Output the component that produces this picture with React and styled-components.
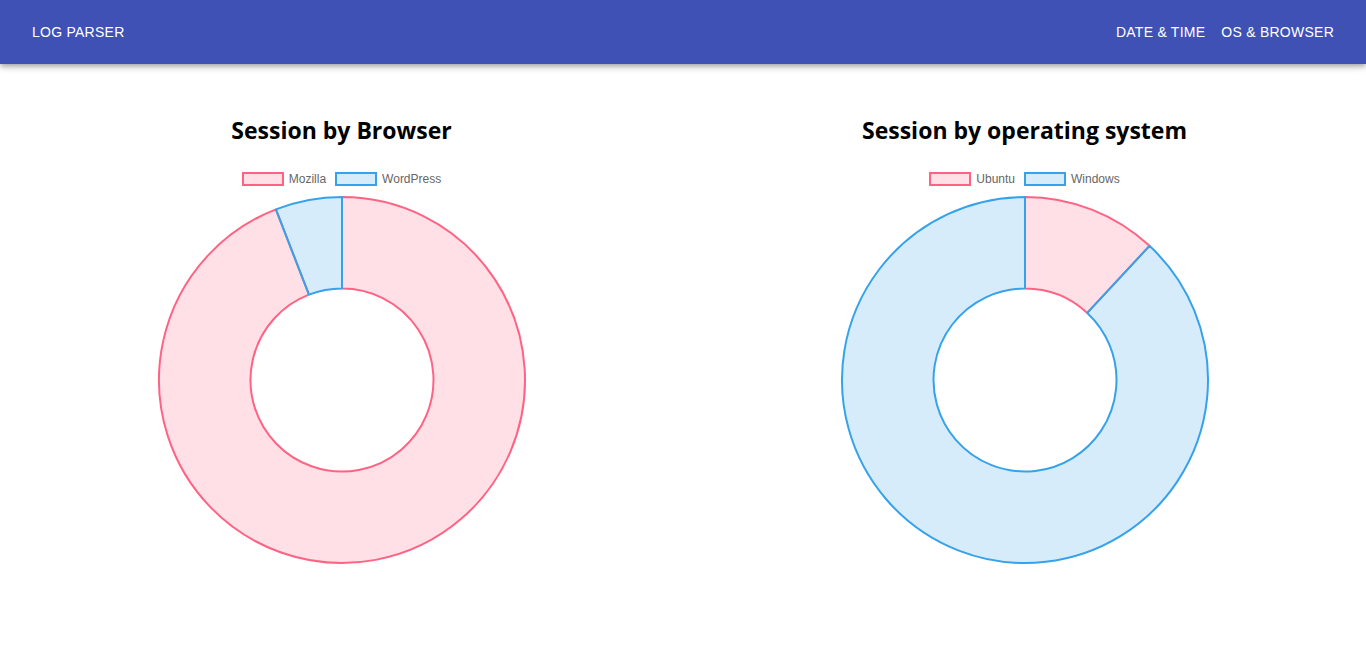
import React from 'react'
import styled, { createGlobalStyle } from 'styled-components'

const GlobalStyle = createGlobalStyle`
  body {
    margin: 0;
    background: #fff;
    font-family: "Liberation Sans", Arial, sans-serif;
  }
`

const PINK = 'rgb(255, 99, 132)'
const PINK_FILL = 'rgba(255, 99, 132, 0.2)'
const BLUE = 'rgb(54, 162, 235)'
const BLUE_FILL = 'rgba(54, 162, 235, 0.2)'

const CHARTS = [
  {
    title: 'Session by Browser',
    data: [
      { label: 'Mozilla', value: 16, border: PINK, fill: PINK_FILL },
      { label: 'WordPress', value: 1, border: BLUE, fill: BLUE_FILL },
    ],
  },
  {
    title: 'Session by operating system',
    data: [
      { label: 'Ubuntu', value: 5, border: PINK, fill: PINK_FILL },
      { label: 'Windows', value: 37, border: BLUE, fill: BLUE_FILL },
    ],
  },
]

const SIZE = 370
const C = SIZE / 2
const OUTER = 183
const INNER = 91.5

const point = (angle, rad) => {
  const x = C + rad * Math.sin(angle)
  const y = C - rad * Math.cos(angle)
  return `${x.toFixed(3)} ${y.toFixed(3)}`
}

const arcPath = (a0, a1) => {
  const large = a1 - a0 > Math.PI ? 1 : 0
  return [
    `M ${point(a0, OUTER)}`,
    `A ${OUTER} ${OUTER} 0 ${large} 1 ${point(a1, OUTER)}`,
    `L ${point(a1, INNER)}`,
    `A ${INNER} ${INNER} 0 ${large} 0 ${point(a0, INNER)}`,
    'Z',
  ].join(' ')
}

const Doughnut = ({ data }) => {
  const total = data.reduce((s, d) => s + d.value, 0)
  let start = 0
  return (
    <svg width={SIZE} height={SIZE} viewBox={`0 0 ${SIZE} ${SIZE}`}>
      {data.map((d) => {
        const end = start + (d.value / total) * Math.PI * 2
        const path = arcPath(start, end)
        start = end
        return (
          <path
            key={d.label}
            d={path}
            fill={d.fill}
            stroke={d.border}
            strokeWidth="2"
            strokeLinejoin="bevel"
          />
        )
      })}
    </svg>
  )
}

const App = () => {
  return (
    <>
      <GlobalStyle />
      <Header>
        <Brand>Log Parser</Brand>
        <Nav>
          <NavLink>Date &amp; Time</NavLink>
          <NavLink>OS &amp; Browser</NavLink>
        </Nav>
      </Header>
      <Main>
        {CHARTS.map((chart) => (
          <Column key={chart.title}>
            <Title>{chart.title}</Title>
            <Legend>
              {chart.data.map((d) => (
                <LegendItem key={d.label}>
                  <Swatch $border={d.border} $fill={d.fill} />
                  <span>{d.label}</span>
                </LegendItem>
              ))}
            </Legend>
            <Doughnut data={chart.data} />
          </Column>
        ))}
      </Main>
    </>
  )
}

const Header = styled.header`
  height: 64px;
  background: #3f51b5;
  display: flex;
  align-items: center;
  justify-content: space-between;
  padding: 0 32px;
  box-shadow: 0px 2px 4px -1px rgba(0, 0, 0, 0.2), 0px 4px 5px 0px rgba(0, 0, 0, 0.14), 0px 1px 10px 0px rgba(0, 0, 0, 0.12);
  position: relative;
  z-index: 1;
`

const Brand = styled.div`
  color: #fff;
  font-size: 14px;
  text-transform: uppercase;
  letter-spacing: 0.25px;
`

const Nav = styled.nav`
  display: flex;
  gap: 16px;
`

const NavLink = styled.a`
  color: #fff;
  font-size: 14px;
  text-transform: uppercase;
  letter-spacing: 0.25px;
  cursor: pointer;
`

const Main = styled.main`
  display: grid;
  grid-template-columns: 1fr 1fr;
  padding-top: 50px;
`

const Column = styled.section`
  display: flex;
  flex-direction: column;
  align-items: center;
`

const Title = styled.h2`
  margin: 0;
  font-family: "Open Sans", "Noto Sans", sans-serif;
  font-weight: 700;
  font-size: 23px;
  line-height: 32px;
  color: #000;
`

const Legend = styled.div`
  display: flex;
  gap: 9px;
  margin-top: 26px;
  margin-bottom: 9px;
  font-family: "Liberation Sans", Arial, sans-serif;
  font-size: 12px;
  line-height: 14px;
  color: #666;
`

const LegendItem = styled.div`
  display: flex;
  align-items: center;
  gap: 5px;
`

const Swatch = styled.span`
  width: 38px;
  height: 10px;
  border: 2px solid ${(p) => p.$border};
  background: ${(p) => p.$fill};
`

export default App
